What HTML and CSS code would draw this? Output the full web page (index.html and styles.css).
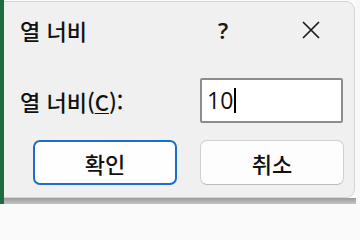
FILE: index.html
```html
<!DOCTYPE html>
<html lang="ko">
<head>
<meta charset="utf-8">
<title>열 너비</title>
<link rel="stylesheet" href="styles.css">
</head>
<body>
<div class="screen">
  <div class="stripe"></div>
  <div class="main">
    <div class="dialog">
      <div class="titlebar">
        <span class="title">열 너비</span>
        <span class="help">?</span>
        <svg class="close" width="18" height="18" viewBox="0 0 18 18"><path d="M1 1 L17 17 M17 1 L1 17" stroke="#1a1a1a" stroke-width="1.7" fill="none"/></svg>
      </div>
      <div class="row">
        <label class="label">열 너비(<u>C</u>):</label>
        <div class="input"><span class="value">10</span><span class="caret"></span></div>
      </div>
      <div class="buttons">
        <button class="btn primary">확인</button>
        <button class="btn">취소</button>
      </div>
    </div>
    <div class="shade"></div>
  </div>
  <div class="right"></div>
</div>
</body>
</html>
```
FILE: styles.css
```css
html, body {
  margin: 0;
  padding: 0;
  background: #fafafa;
}
.screen {
  display: flex;
  width: 360px;
  height: 204px;
  overflow: hidden;
  font-family: "Noto Sans CJK KR", "Noto Sans", sans-serif;
  font-weight: 500;
  color: #111;
}
.stripe {
  width: 4px;
  background: #1f6b40;
  flex: none;
}
.main {
  width: 352px;
  display: flex;
  flex-direction: column;
  flex: none;
}
.dialog {
  margin-top: 1px;
  height: 197px;
  width: 351px;
  box-sizing: border-box;
  background: #f0f0f0;
  border: 1px solid #d4d4d4;
  border-left: none;
  border-radius: 0 9px 9px 0;
  display: flex;
  flex-direction: column;
}
.shade {
  flex: 1;
  background: linear-gradient(#9a9a9a, #c4c4c4);
  margin-right: -8px;
}
.right {
  flex: 1;
  background: #f8f8f8;
}
.titlebar {
  height: 55px;
  display: flex;
  align-items: center;
  padding-left: 16px;
}
.title {
  font-size: 22px;
  line-height: 1;
  width: 198px;
}
.help {
  font-family: "Noto Sans", sans-serif;
  font-weight: 600;
  font-size: 22px;
  line-height: 1;
  width: 84px;
  color: #1a1a1a;
}
.close {
  display: block;
}
.row {
  margin-top: 21px;
  display: flex;
  align-items: center;
  padding-left: 16px;
}
.label {
  font-size: 22px;
  line-height: 1;
  width: 180px;
}
.label u {
  text-underline-offset: 2px;
  text-decoration-thickness: 1px;
}
.input {
  width: 143px;
  height: 45px;
  box-sizing: border-box;
  background: #fff;
  border: 2px solid #8c8c8c;
  border-radius: 2px;
  display: flex;
  align-items: center;
  padding-left: 5px;
}
.value {
  font-family: "Open Sans", sans-serif;
  font-weight: 400;
  font-size: 23px;
  line-height: 1;
  color: #111;
}
.caret {
  width: 2px;
  height: 25px;
  background: #000;
  margin-left: 1px;
}
.buttons {
  margin-top: 17px;
  display: flex;
  gap: 23px;
  padding-left: 29px;
}
.btn {
  width: 144px;
  height: 45px;
  box-sizing: border-box;
  font-family: "Noto Sans CJK KR", sans-serif;
  font-weight: 500;
  font-size: 22px;
  line-height: 1;
  color: #111;
  background: #fdfdfd;
  border: 1px solid #d0d0d0;
  border-bottom-color: #bdbdbd;
  border-radius: 7px;
  padding: 0;
}
.btn.primary {
  border: 2px solid #1b6fc8;
  background: #fefefe;
}
```
